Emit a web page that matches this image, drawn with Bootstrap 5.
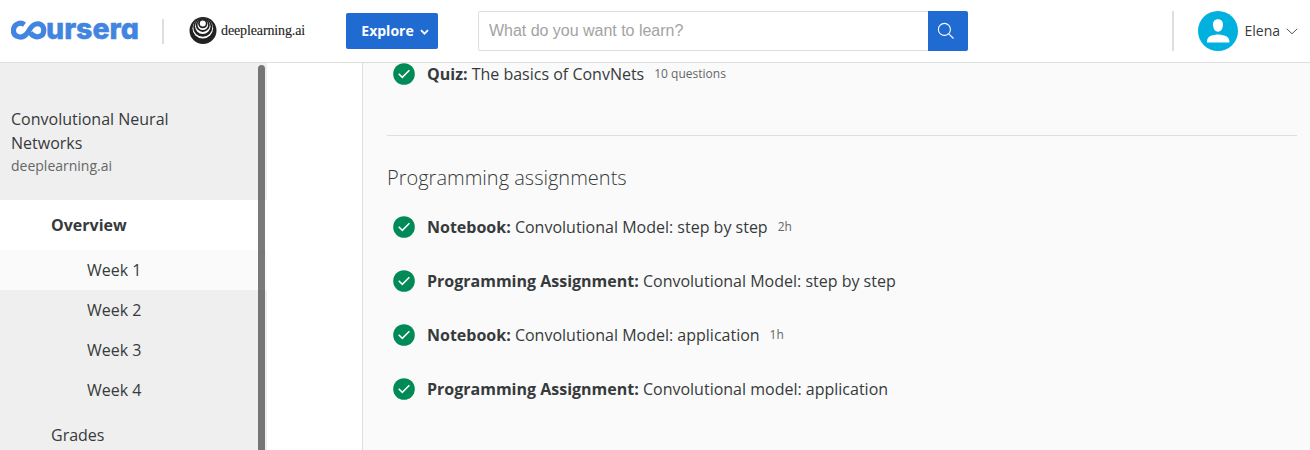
<!DOCTYPE html>
<html lang="en">
<head>
<meta charset="utf-8">
<meta name="viewport" content="width=device-width, initial-scale=1">
<title>Convolutional Neural Networks | Coursera</title>
<link rel="stylesheet" href="https://cdn.jsdelivr.net/npm/bootstrap@5.3.0/dist/css/bootstrap.min.css">
<style>
body{font-family:"Open Sans",sans-serif;font-size:16px;line-height:24px;color:#373a3c;background:#fff;height:100vh;overflow:hidden}
.topbar{height:63px;border-bottom:1px solid #dedede;padding:0 12px 0 11px;flex:none}
.wordmark{width:131px;height:50px;flex:none}
.wordmark text{font-family:Inter,sans-serif;font-weight:800;font-size:29.5px;font-feature-settings:"cv11"}
.rule-brand{width:2px;height:25px;background:#dedede;margin-left:20px;flex:none}
.rule-user{width:2px;height:40px;background:#dedede}
.partner{margin-left:25px;gap:4px;color:#222;width:117px;flex:none}
.partner span{font-family:"Liberation Serif",serif;font-size:14px;letter-spacing:-.12px;-webkit-text-stroke:.1px #222}
.btn-explore{--bs-btn-color:#fff;--bs-btn-bg:#1f6bd1;--bs-btn-hover-bg:#1a5cb5;--bs-btn-hover-color:#fff;width:92px;height:36px;margin-left:40px;font-size:14px;font-weight:700;border-radius:2px;border:0;gap:6px;padding:0 0 1px 6px;flex:none}
.search{width:490px;height:40px;margin-left:40px}
.search .form-control{border:1px solid #dedede;border-radius:2px 0 0 2px;padding:0 10px;font:16px "Liberation Sans",sans-serif;height:40px}
.search .form-control::placeholder{color:#a3a3a3;opacity:1;letter-spacing:-.02px}
.search .btn{background:#1f6bd1;width:40px;border:0;border-radius:0 2px 2px 0;padding:0 4px 0 0}
.user{font-size:14px}
.user .name{margin:0 6px 0 6px}
.sidebar{width:267px;background:#efefef;flex:none}
.course{height:137px;padding:44px 80px 0 11px}
.course small{font-size:14px;line-height:22px;color:#666}
.sidebar .nav-link{color:#373a3c;height:40px;padding:8px 0 0 87px}
.sidebar .nav-link.top{height:50px;padding:13px 0 0 51px}
.sidebar .nav-link.current{background:#fff;font-weight:700}
.sidebar .nav-link.week-open{background:#fafafa}
.thumb{width:7px;right:2px;top:2px;bottom:-10px;border-radius:4px;background:rgba(80,80,80,.76)}
.panel{margin-left:95px;border-left:1px solid #dedede;background:#fafafa;padding:0 13px 0 24px;min-width:0}
.item{height:24px;padding-left:6px;gap:12px}
.item.first{height:22px}
.item svg{flex:none}
.item .meta{font-size:12px;color:#666;margin-left:-2px}
.divider{border-top:1px solid #dedede;margin-top:50px}
.panel h2{font-size:20px;font-weight:300;line-height:30px;margin:27px 0 22px}
.stack{gap:30px}
</style>
</head>
<body class="d-flex flex-column">
<svg width="0" height="0" class="position-absolute" aria-hidden="true"><symbol id="done" viewBox="0 0 22 22"><circle cx="11" cy="11" r="10.8" fill="#008a57"/><path d="M5.7 10.8 9.3 14.4 16.4 7.3" fill="none" stroke="#fff" stroke-width="1.5"/></symbol></svg>
<header class="topbar d-flex align-items-center">
  <svg class="wordmark" viewBox="0 -10 131 50" role="img" aria-label="coursera">
    <path d="M13.500 8.700C11 6.900 8.800 7 7.200 7.600 1.200 9.800 1 18 5.800 20.200 11.500 22.700 15.500 19 18 14.500 20.500 10 23.500 7.300 27.800 7.800 34 8.500 34.500 18.500 28.800 20.300 25 21.500 21.600 20.100 19.400 16.800" fill="none" stroke="#4285e0" stroke-width="5.200"/>
    <text x="35" y="22.800" textLength="93" lengthAdjust="spacingAndGlyphs" fill="#4285e0" stroke="#4285e0" stroke-width=".5">ursera</text>
  </svg>
  <div class="rule-brand"></div>
  <div class="partner d-flex align-items-center">
    <svg width="28" height="28" viewBox="0 0 28 28" class="flex-shrink-0"><circle cx="14" cy="13.500" r="13.500" fill="#222"/><circle cx="13.800" cy="11.300" r="10.300" fill="#fff"/><circle cx="13.800" cy="10.100" r="9.600" fill="#222"/><circle cx="13.800" cy="9.200" r="7.700" fill="#fff"/><circle cx="13.800" cy="7.900" r="7" fill="#222"/><circle cx="13.800" cy="7.800" r="5.300" fill="#fff"/><circle cx="13.800" cy="6.600" r="4.700" fill="#222"/><circle cx="13.800" cy="6.500" r="3" fill="#fff"/></svg>
    <span>deeplearning.ai</span>
  </div>
  <button class="btn btn-explore d-flex align-items-center justify-content-center">Explore<svg class="mt-1" width="9" height="7" viewBox="0 0 9 7"><path d="M1 1.200 4.500 4.700 8 1.200" fill="none" stroke="#fff" stroke-width="1.800"/></svg></button>
  <form class="search input-group flex-nowrap">
    <input class="form-control" placeholder="What do you want to learn?" aria-label="Search">
    <button class="btn d-flex align-items-center justify-content-center" type="button" aria-label="Search"><svg width="18" height="18" viewBox="0 0 18 18" fill="none" stroke="#fff" stroke-width="1.1"><circle cx="7.4" cy="7.4" r="6"/><path d="m11.8 11.8 4.7 4.7"/></svg></button>
  </form>
  <div class="user d-flex align-items-center ms-auto">
    <div class="rule-user"></div>
    <svg class="ms-4" width="40" height="40" viewBox="0 0 40 40"><circle cx="20" cy="20" r="20" fill="#00b1df"/><path d="M20 8.200c3.400 0 5.300 2.300 5 6-.3 3.700-2.300 6.500-5 6.500s-4.700-2.800-5-6.500c-.3-3.700 1.600-6 5-6ZM9 31.400c0-5.200 2.500-6.300 6-7.200 1.700-.5 3-.7 5-.7s3.300.2 5 .7c3.500.9 6.500 2 6.500 7.200Z" fill="#fff"/></svg>
    <span class="name">Elena</span>
    <svg width="12" height="7" viewBox="0 0 12 7"><path d="m.8.800 5.200 5 5.200-5" fill="none" stroke="#555" stroke-width="1"/></svg>
  </div>
</header>
<div class="d-flex flex-grow-1 overflow-hidden">
  <aside class="sidebar position-relative">
    <div class="course"><div>Convolutional Neural Networks</div><small class="d-block">deeplearning.ai</small></div>
    <nav class="nav flex-column flex-nowrap">
      <a class="nav-link top current" href="#">Overview</a>
      <a class="nav-link week-open" href="#">Week 1</a>
      <a class="nav-link" href="#">Week 2</a>
      <a class="nav-link" href="#">Week 3</a>
      <a class="nav-link" href="#">Week 4</a>
      <a class="nav-link top" href="#">Grades</a>
    </nav>
    <div class="thumb position-absolute"></div>
  </aside>
  <main class="panel flex-grow-1">
    <div class="item first d-flex align-items-center"><svg width="22" height="22"><use href="#done"/></svg><span><strong>Quiz:</strong> The basics of ConvNets</span><span class="meta">10 questions</span></div>
    <div class="divider"></div>
    <h2>Programming assignments</h2>
    <div class="stack d-flex flex-column">
      <div class="item d-flex align-items-center"><svg width="22" height="22"><use href="#done"/></svg><span><strong>Notebook:</strong> Convolutional Model: step by step</span><span class="meta">2h</span></div>
      <div class="item d-flex align-items-center"><svg width="22" height="22"><use href="#done"/></svg><span><strong>Programming Assignment:</strong> Convolutional Model: step by step</span></div>
      <div class="item d-flex align-items-center"><svg width="22" height="22"><use href="#done"/></svg><span><strong>Notebook:</strong> Convolutional Model: application</span><span class="meta">1h</span></div>
      <div class="item d-flex align-items-center"><svg width="22" height="22"><use href="#done"/></svg><span><strong>Programming Assignment:</strong> Convolutional model: application</span></div>
    </div>
  </main>
</div>
<script src="https://cdn.jsdelivr.net/npm/bootstrap@5.3.0/dist/js/bootstrap.bundle.min.js"></script>
</body>
</html>
